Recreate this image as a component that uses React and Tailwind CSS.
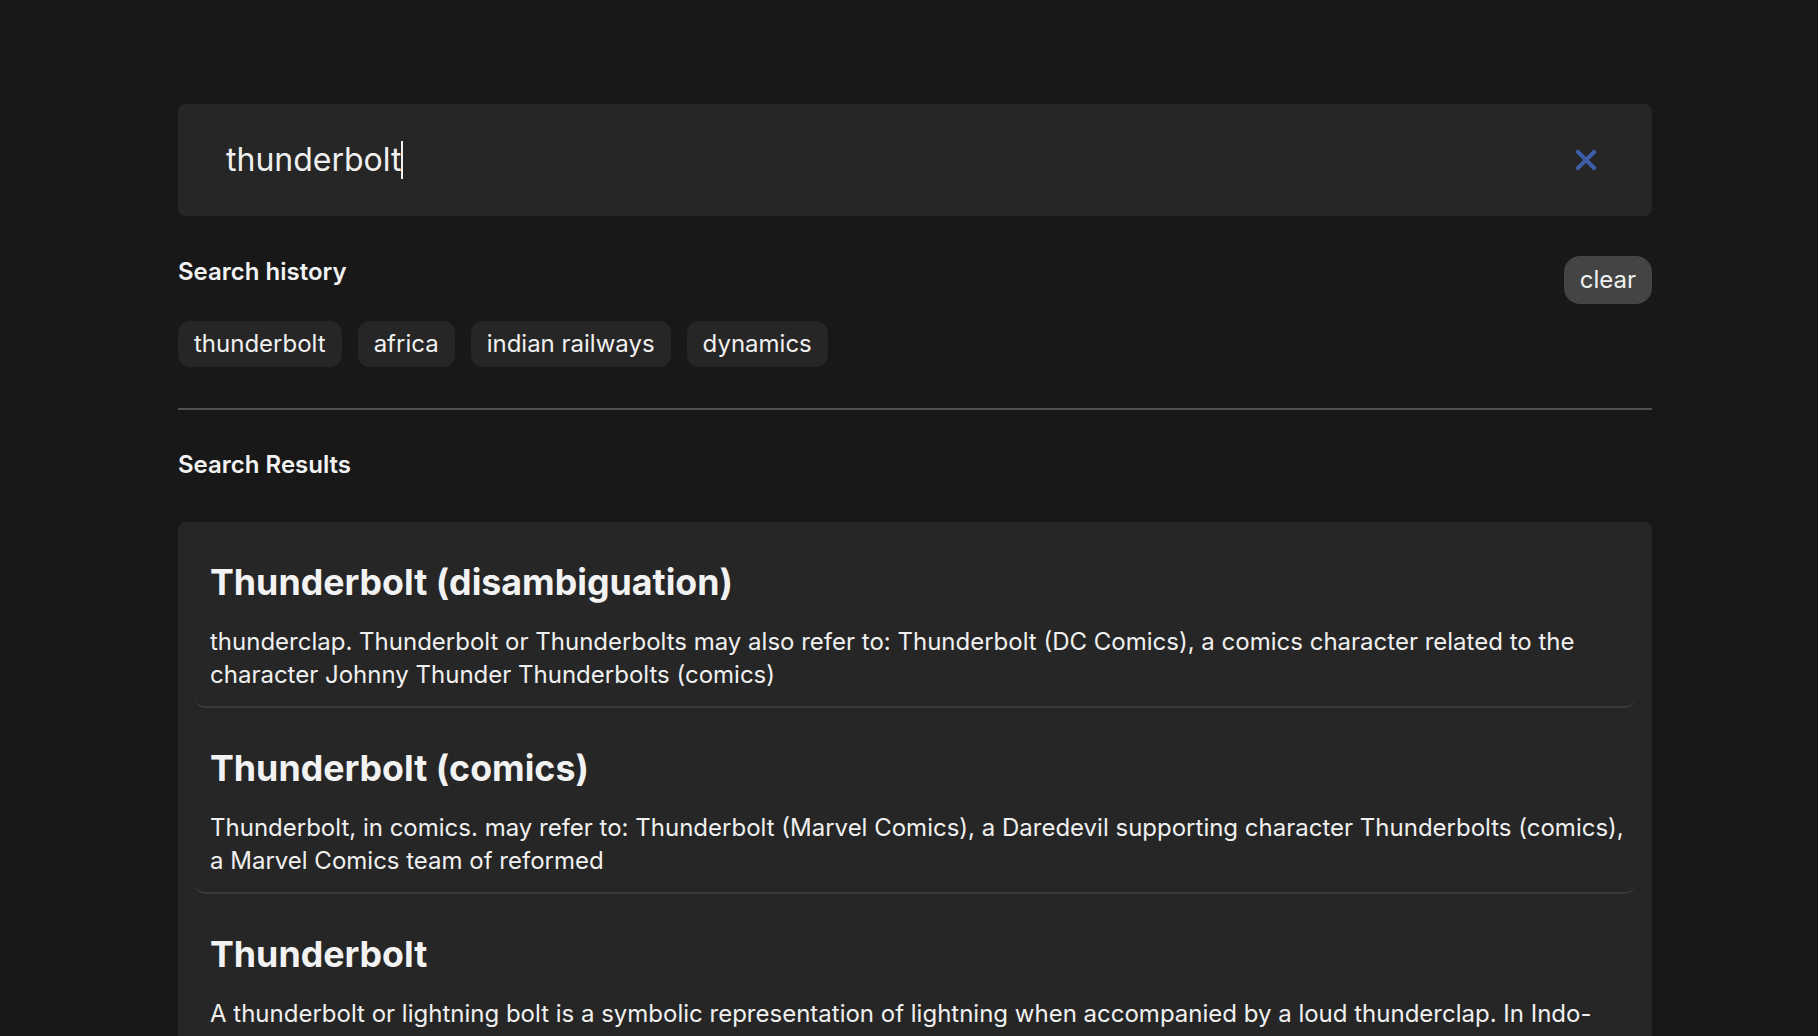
import React from "react";

const history = ["thunderbolt", "africa", "indian railways", "dynamics"];

const results = [
  {
    title: "Thunderbolt (disambiguation)",
    desc: "thunderclap. Thunderbolt or Thunderbolts may also refer to: Thunderbolt (DC Comics), a comics character related to the character Johnny Thunder Thunderbolts (comics)",
  },
  {
    title: "Thunderbolt (comics)",
    desc: "Thunderbolt, in comics. may refer to: Thunderbolt (Marvel Comics), a Daredevil supporting character Thunderbolts (comics), a Marvel Comics team of reformed",
  },
  {
    title: "Thunderbolt",
    desc: "A thunderbolt or lightning bolt is a symbolic representation of lightning when accompanied by a loud thunderclap. In Indo-European mythology, the thunderbolt was identified with the 'Sky Father'",
  },
];

export default function App() {
  return (
    <div className="min-h-screen bg-[#181818] font-['Inter',sans-serif] text-[#f2f2f2]">
      <div className="ml-[178px] w-[1474px] pt-[104px] pb-10">
        {/* search box */}
        <div className="h-[112px] rounded-lg bg-[#262626] flex items-center pl-[48px] pr-[55px]">
          <div className="flex-1 flex items-center text-[32px] leading-[40px] text-[#f0f0f0]">
            <span>thunderbolt</span>
            <span className="inline-block w-[1.5px] h-[38px] bg-[#f0f0f0]"></span>
          </div>
          <svg width="22" height="22" viewBox="0 0 22 22" className="shrink-0">
            <path d="M3 3 L19 19 M19 3 L3 19" stroke="#3d5ea8" strokeWidth="4" strokeLinecap="square" fill="none" />
          </svg>
        </div>

        {/* search history */}
        <div className="mt-[41px] flex justify-between items-start">
          <h2 className="text-[24px] leading-[30px] font-semibold">Search history</h2>
          <button className="-mt-px h-[48px] px-4 rounded-2xl bg-[#444444] text-[24px] leading-[30px] text-[#f0f0f0]">
            clear
          </button>
        </div>
        <div className="mt-[17px] flex gap-4">
          {history.map((h) => (
            <div
              key={h}
              className="h-[46px] px-4 flex items-center rounded-xl bg-[#262626] text-[24px] leading-[30px] text-[#f0f0f0]"
            >
              {h}
            </div>
          ))}
        </div>

        <div className="mt-[41px] h-[2px] bg-[#505050]"></div>

        <h2 className="mt-[40px] text-[24px] leading-[30px] font-semibold">Search Results</h2>

        <div className="mt-[42px] rounded-lg bg-[#262626]">
          {results.map((r) => (
            <div
              key={r.title}
              className="mx-[17px] pl-[15px] pr-[8px] pt-[38px] pb-[15px] rounded-[10px] border-b-2 border-[#3a3a3a]"
            >
              <h3 className="text-[35.75px] leading-[44px] font-bold">{r.title}</h3>
              <p className="mt-[22px] text-[24px] leading-[32.5px] text-[#f0f0f0]">{r.desc}</p>
            </div>
          ))}
        </div>
      </div>
    </div>
  );
}
